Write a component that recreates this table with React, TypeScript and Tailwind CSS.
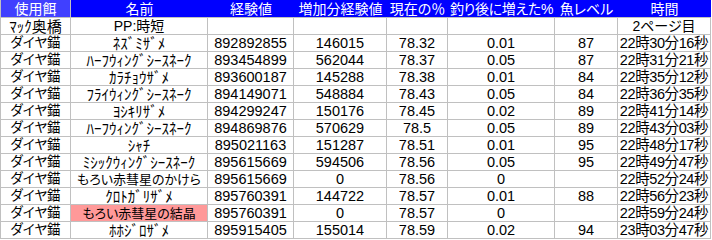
import React from "react";

type Row = {
  bait: string;
  name: string;
  exp: string;
  gain: string;
  pct: string;
  inc: string;
  lv: string;
  time: string;
  full?: boolean;
  hl?: boolean;
};

const rows: Row[] = [
  { bait: "ダイヤ錨", name: "ﾈｽﾞﾐｻﾞﾒ", exp: "892892855", gain: "146015", pct: "78.32", inc: "0.01", lv: "87", time: "22時30分16秒" },
  { bait: "ダイヤ錨", name: "ﾊｰﾌｳｨﾝｸﾞｼｰｽﾈｰｸ", exp: "893454899", gain: "562044", pct: "78.37", inc: "0.05", lv: "87", time: "22時31分21秒" },
  { bait: "ダイヤ錨", name: "ｶﾗﾁｮｳｻﾞﾒ", exp: "893600187", gain: "145288", pct: "78.38", inc: "0.01", lv: "84", time: "22時35分12秒" },
  { bait: "ダイヤ錨", name: "ﾌﾗｲｳｨﾝｸﾞｼｰｽﾈｰｸ", exp: "894149071", gain: "548884", pct: "78.43", inc: "0.05", lv: "84", time: "22時36分35秒" },
  { bait: "ダイヤ錨", name: "ﾖｼｷﾘｻﾞﾒ", exp: "894299247", gain: "150176", pct: "78.45", inc: "0.02", lv: "89", time: "22時41分14秒" },
  { bait: "ダイヤ錨", name: "ﾊｰﾌｳｨﾝｸﾞｼｰｽﾈｰｸ", exp: "894869876", gain: "570629", pct: "78.5", inc: "0.05", lv: "89", time: "22時43分03秒" },
  { bait: "ダイヤ錨", name: "ｼｬﾁ", exp: "895021163", gain: "151287", pct: "78.51", inc: "0.01", lv: "95", time: "22時48分17秒" },
  { bait: "ダイヤ錨", name: "ﾐｼｯｸｳｨﾝｸﾞｼｰｽﾈｰｸ", exp: "895615669", gain: "594506", pct: "78.56", inc: "0.05", lv: "95", time: "22時49分47秒" },
  { bait: "ダイヤ錨", name: "もろい赤彗星のかけら", exp: "895615669", gain: "0", pct: "78.56", inc: "0", lv: "", time: "22時52分24秒", full: true },
  { bait: "ダイヤ錨", name: "ｸﾛﾄｶﾞﾘｻﾞﾒ", exp: "895760391", gain: "144722", pct: "78.57", inc: "0.01", lv: "88", time: "22時56分23秒" },
  { bait: "ダイヤ錨", name: "もろい赤彗星の結晶", exp: "895760391", gain: "0", pct: "78.57", inc: "0", lv: "", time: "22時59分24秒", full: true, hl: true },
  { bait: "ダイヤ錨", name: "ﾎﾎｼﾞﾛｻﾞﾒ", exp: "895915405", gain: "155014", pct: "78.59", inc: "0.02", lv: "94", time: "23時03分47秒" },
];

const headers = ["使用餌", "名前", "経験値", "増加分経験値", "現在の％", "釣り後に増えた%", "魚レベル", "時間"];

const cols = "grid grid-cols-[70px_137px_86px_93px_61px_107px_63px_93px]";
const cell =
  "flex items-center justify-center whitespace-nowrap overflow-hidden border-r border-b border-[#c0c0c0] h-[17px] leading-none";

export default function App() {
  return (
    <div
      className="w-[712px] h-[240px] bg-white text-black text-[14px] [font-feature-settings:'palt'] overflow-hidden"
      style={{ fontFamily: '"Liberation Sans", "Noto Sans CJK JP", sans-serif' }}
    >
      <div className="border-l border-[#c0c0c0] w-max">
        {/* ヘッダー */}
        <div className={cols}>
          {headers.map((h, i) => (
            <div
              key={h}
              className={`flex items-center justify-center whitespace-nowrap overflow-hidden h-[18px] border-b border-[#c0c0c0] text-white leading-none ${
                i === 0 ? "bg-[#4040ff] border-r" : "bg-[#0000ff]"
              } ${i === 5 ? "tracking-[-0.3px]" : ""}`}
            >
              {h}
            </div>
          ))}
        </div>

        {/* マック奥橋 */}
        <div className={cols}>
          <div className={`${cell} text-[15px]`}>ﾏｯｸ奥橋</div>
          <div className={cell}>PP:時短</div>
          <div className={cell} />
          <div className={cell} />
          <div className={cell} />
          <div className={cell} />
          <div className={cell} />
          <div className={cell}>2ページ目</div>
        </div>

        {rows.map((r, i) => (
          <div key={i} className={cols}>
            <div className={`${cell} text-[13.5px]`}>{r.bait}</div>
            <div className={`${cell} ${r.hl ? "bg-[#ff9999]" : ""} ${r.full ? "text-[13px]" : "text-[15px]"}`}>
              {r.name}
            </div>
            <div className={`${cell} text-[14.5px]`}>{r.exp}</div>
            <div className={`${cell} text-[14.5px]`}>{r.gain}</div>
            <div className={`${cell} text-[14.5px]`}>{r.pct}</div>
            <div className={`${cell} text-[14.5px]`}>{r.inc}</div>
            <div className={`${cell} text-[14.5px]`}>{r.lv}</div>
            <div className={`${cell} text-[14.5px] tracking-[-0.4px]`}>{r.time}</div>
          </div>
        ))}
      </div>
    </div>
  );
}
